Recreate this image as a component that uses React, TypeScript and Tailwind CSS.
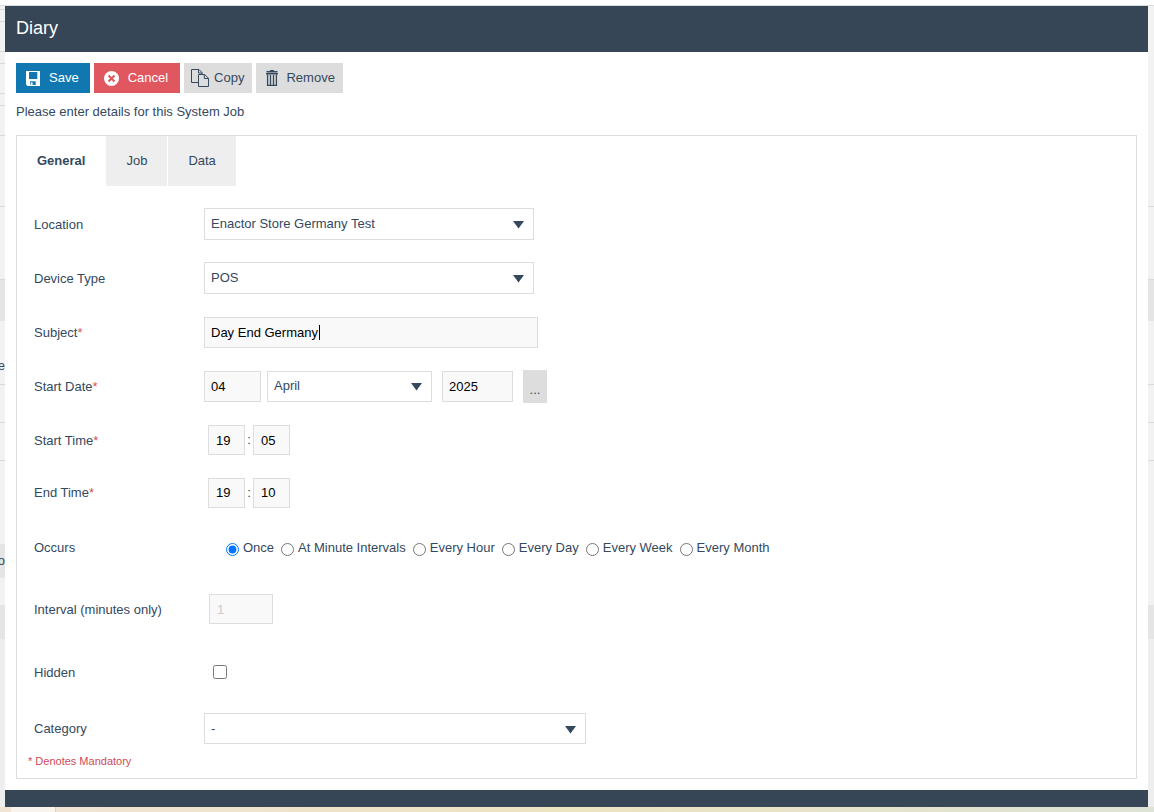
import React from 'react';

const TABS = ['General', 'Job', 'Data'];

const OCCURS = ['Once', 'At Minute Intervals', 'Every Hour', 'Every Day', 'Every Week', 'Every Month'];

// Slices of the page that stay visible on each side of the dialog
const LEFT_EDGE = [
  { className: 'h-1 border-b border-[#d9d9d9] bg-[#f2f2f2]' },
  { className: 'h-3 border-b border-[#d9d9d9] bg-[#f2f2f2]' },
  { className: 'h-[30px] border-b border-[#d9d9d9] bg-[#f2f2f2]' },
  { className: 'h-3 border-b border-[#d9d9d9] bg-[#f2f2f2]' },
  { className: 'h-[30px] border-b border-[#d9d9d9] bg-[#f2f2f2]' },
  { className: 'h-3 border-b border-[#d9d9d9] bg-[#f2f2f2]' },
  { className: 'h-[30px] border-b border-[#d9d9d9] bg-[#f2f2f2]' },
  { className: 'h-[71px] border-b border-[#d9d9d9] bg-[#f2f2f2]' },
  { className: 'h-[73px] border-b border-[#d9d9d9] bg-[#f2f2f2]' },
  { className: 'h-[41px] bg-[#e5e5e5]' },
  { className: 'h-16 border-b border-[#d9d9d9] bg-[#f2f2f2] pt-[37px]', text: 'e' },
  { className: 'h-[38px] border-b border-[#d9d9d9] bg-[#f2f2f2]' },
  { className: 'h-[38px] border-b border-[#d9d9d9] bg-[#f2f2f2]' },
  { className: 'h-[83px] bg-[#f2f2f2]' },
  { className: 'h-[34px] bg-[#e5e5e5] pt-[9px]', text: 'o' },
  { className: 'h-[27px] bg-[#f2f2f2]' },
  { className: 'h-[34px] bg-[#e5e5e5]' },
  { className: 'flex-1 bg-[#eeeeee]' },
];

const RIGHT_EDGE = [
  { className: 'h-[201px] border-b border-[#d9d9d9] bg-[#f2f2f2]' },
  { className: 'h-[73px] border-b border-[#d9d9d9] bg-[#f2f2f2]' },
  { className: 'h-[41px] bg-[#e5e5e5]' },
  { className: 'h-16 border-b border-[#d9d9d9] bg-[#f2f2f2]' },
  { className: 'h-[38px] border-b border-[#d9d9d9] bg-[#f2f2f2]' },
  { className: 'h-[38px] border-b border-[#d9d9d9] bg-[#f2f2f2]' },
  { className: 'h-36 bg-[#f2f2f2]' },
  { className: 'h-[34px] bg-[#e5e5e5]' },
  { className: 'flex-1 bg-[#eeeeee]' },
];

interface EdgeProps {
  slices: { className: string; text?: string }[];
  className: string;
}

const Edge: React.FC<EdgeProps> = ({ slices, className }) => (
  <div className={`flex shrink-0 flex-col overflow-hidden ${className}`}>
    {slices.map((slice, index) => (
      <div key={index} className={`flex justify-end leading-4 ${slice.className}`}>
        {slice.text}
      </div>
    ))}
  </div>
);

const SaveIcon = () => (
  <svg width="14" height="15" viewBox="0 0 14 15" aria-hidden="true">
    <path fill="currentColor" fillRule="evenodd" d="M0 0h14v15H1.4L0 13.6zM3 1v7h8.3V1zM4 10.3v3.8h5.7v-3.8z" />
    <path fill="currentColor" d="M4.6 11.4h2v2.7h-2z" />
  </svg>
);

const CancelIcon = () => (
  <svg width="15" height="15" viewBox="0 0 15 15" aria-hidden="true">
    <circle cx="7.5" cy="7.5" r="7.5" fill="currentColor" />
    <path d="M4.5 4.5l6 6M10.5 4.5l-6 6" stroke="#e1575f" strokeWidth="2" />
  </svg>
);

const CopyIcon = () => (
  <svg width="18" height="18" viewBox="0 0 18 18" fill="none" stroke="currentColor" aria-hidden="true">
    <path d="M7 13.5H.5V.5h7.5l3 3v1.5" />
    <path d="M7.5 .5v3.5h3.5" />
    <path d="M7.5 5.5h6l4 3.7v8.3h-10z" />
    <path d="M13.3 5.5v4h4.2" />
  </svg>
);

const RemoveIcon = () => (
  <svg width="12" height="16" viewBox="0 0 12 16" aria-hidden="true">
    <path fill="currentColor" d="M4 0h4v1h3.5v1.5H.5V1H4zM0 3h12v1.5H0z" />
    <path d="M1.6 4.5v10.8h8.8V4.5M4.5 5v10M7.5 5v10" fill="none" stroke="currentColor" strokeWidth="1.3" />
  </svg>
);

interface RowProps {
  label: string;
  htmlFor?: string;
  required?: boolean;
  className?: string;
  children: React.ReactNode;
}

const Row: React.FC<RowProps> = ({ label, htmlFor, required, className = 'min-h-[54px]', children }) => (
  <div className={`flex items-center ${className}`}>
    <label htmlFor={htmlFor} className="w-[171px] shrink-0 pl-px pt-px leading-5">
      {label}
      {required && <span className="text-[#d9534f]">*</span>}
    </label>
    {children}
  </div>
);

interface SelectProps {
  id: string;
  options: string[];
  label?: string;
  className: string;
}

const Select: React.FC<SelectProps> = ({ id, options, label, className }) => (
  <div className={`relative ${className}`}>
    <select
      id={id}
      aria-label={label}
      className="h-full w-full appearance-none border border-[#dddddd] bg-white pl-1.5 pr-8 outline-none"
    >
      {options.map((option) => (
        <option key={option}>{option}</option>
      ))}
    </select>
    <svg
      className="pointer-events-none absolute right-2.5 top-1/2 -mt-[3px]"
      width="11"
      height="8"
      viewBox="0 0 11 8"
      aria-hidden="true"
    >
      <path d="M0 0h11L5.5 7.5z" fill="#34495e" />
    </svg>
  </div>
);

interface TextBoxProps extends React.InputHTMLAttributes<HTMLInputElement> {
  className: string;
}

const TextBox: React.FC<TextBoxProps> = ({ className, ...props }) => (
  <input
    type="text"
    className={`border border-[#dddddd] bg-[#f9f9f9] text-black outline-none disabled:text-[#c8c8c8] ${className}`}
    {...props}
  />
);

interface TimeFieldsProps {
  id: string;
  label: string;
  hour: string;
  minute: string;
}

const TimeFields: React.FC<TimeFieldsProps> = ({ id, label, hour, minute }) => (
  <div className="ml-1 flex items-center">
    <TextBox id={id} defaultValue={hour} className="h-[30px] w-[37px] pl-[7px]" />
    <span className="w-2 text-center">:</span>
    <TextBox aria-label={`${label} minutes`} defaultValue={minute} className="h-[30px] w-[37px] pl-[7px]" />
  </div>
);

const App: React.FC = () => {
  const [tab, setTab] = React.useState('General');
  const [occurs, setOccurs] = React.useState('Once');

  return (
    <div className="flex min-h-screen flex-col bg-white font-['Liberation_Sans',Arial,sans-serif] text-[13px] text-[#34495e]">
      <div className="h-1.5 border-b border-[#d9dcdc]" />

      <div className="flex flex-1">
        <Edge slices={LEFT_EDGE} className="w-[5px]" />

        <main className="flex min-w-0 flex-1 flex-col bg-white">
          <header className="flex h-[46px] items-center bg-[#374656] px-[11px] pb-0.5">
            <h1 className="text-lg text-white">Diary</h1>
          </header>

          <div className="flex flex-1 flex-col px-[11px] py-[11px]">
            <div className="flex gap-1">
              <button type="button" className="flex h-[30px] items-center gap-[9px] bg-[#1177b0] pl-2.5 pr-[11px] text-white">
                <SaveIcon />
                Save
              </button>
              <button type="button" className="flex h-[30px] items-center gap-[9px] bg-[#e1575f] pl-2.5 pr-3 text-white">
                <CancelIcon />
                Cancel
              </button>
              <button type="button" className="flex h-[30px] items-center gap-[5px] bg-[#dddddd] pl-[7px] pr-2">
                <CopyIcon />
                Copy
              </button>
              <button type="button" className="flex h-[30px] items-center gap-2 bg-[#dddddd] pl-2.5 pr-2">
                <RemoveIcon />
                Remove
              </button>
            </div>

            <p className="mb-[13px] mt-[9px] leading-5">Please enter details for this System Job</p>

            <section className="flex-1 border border-[#dddddd] pb-[11px]">
              <div role="tablist" className="flex gap-px">
                {TABS.map((name) => (
                  <button
                    key={name}
                    type="button"
                    role="tab"
                    aria-selected={tab === name}
                    onClick={() => setTab(name)}
                    className={`h-[50px] px-5 ${tab === name ? 'bg-white font-bold' : 'bg-[#eeeeee]'}`}
                  >
                    {name}
                  </button>
                ))}
              </div>

              <form className="pl-4 pt-[11px]">
                <Row label="Location" htmlFor="location">
                  <Select id="location" options={['Enactor Store Germany Test']} className="h-8 w-[330px]" />
                </Row>
                <Row label="Device Type" htmlFor="deviceType">
                  <Select id="deviceType" options={['POS']} className="h-8 w-[330px]" />
                </Row>
                <Row label="Subject" htmlFor="subject" required>
                  <div className="relative">
                    <TextBox
                      id="subject"
                      defaultValue="Day End Germany"
                      className="block h-[31px] w-[334px] pl-1.5 caret-transparent"
                    />
                    <span className="absolute left-[115px] top-2 h-[15px] w-px bg-black" />
                  </div>
                </Row>
                <Row label="Start Date" htmlFor="startDay" required>
                  <TextBox id="startDay" defaultValue="04" className="h-[31px] w-[57px] pl-1.5" />
                  <Select id="startMonth" label="Month" options={['April']} className="ml-1.5 h-[31px] w-[165px]" />
                  <TextBox aria-label="Year" defaultValue="2025" className="ml-2.5 h-[31px] w-[71px] pl-1.5" />
                  <button type="button" aria-label="Pick a date" className="ml-2.5 h-[33px] w-6 bg-[#dddddd] pt-2">
                    ...
                  </button>
                </Row>
                <Row label="Start Time" htmlFor="startHour" required>
                  <TimeFields id="startHour" label="Start" hour="19" minute="05" />
                </Row>
                <Row label="End Time" htmlFor="endHour" required className="min-h-[51px]">
                  <TimeFields id="endHour" label="End" hour="19" minute="10" />
                </Row>
                <Row label="Occurs" htmlFor="occurs-0" className="min-h-[59px]">
                  <div className="ml-[22px] flex flex-wrap gap-[7px]">
                    {OCCURS.map((option, index) => (
                      <label key={option} className="flex items-center gap-1">
                        <input
                          id={`occurs-${index}`}
                          type="radio"
                          name="occurs"
                          checked={occurs === option}
                          onChange={() => setOccurs(option)}
                          className="mt-1 size-[13px]"
                        />
                        {option}
                      </label>
                    ))}
                  </div>
                </Row>
                <Row label="Interval (minutes only)" htmlFor="interval" className="min-h-16">
                  <TextBox id="interval" defaultValue="1" disabled className="ml-[5px] h-[30px] w-16 pl-[7px]" />
                </Row>
                <Row label="Hidden" htmlFor="hidden" className="min-h-[62px]">
                  <input id="hidden" type="checkbox" className="ml-[9px] size-[14px]" />
                </Row>
                <Row label="Category" htmlFor="category" className="min-h-[51px]">
                  <Select id="category" options={['-']} className="h-[31px] w-[382px]" />
                </Row>
              </form>

              <p className="pl-[11px] pt-px text-[11px] leading-3 text-[#cf4a55]">* Denotes Mandatory</p>
            </section>
          </div>

          <footer className="h-[17px] bg-[#374656]" />
        </main>

        <Edge slices={RIGHT_EDGE} className="w-1.5" />
      </div>

      <div className="flex h-[5px] bg-linear-to-r from-[#f1e4d5] via-[#ece3c0] to-[#dde3d6]">
        <div className="ml-[11px] w-[45px] border-r border-[#d8cfc2] bg-[#f8f4eb]" />
      </div>
    </div>
  );
};

export default App;
